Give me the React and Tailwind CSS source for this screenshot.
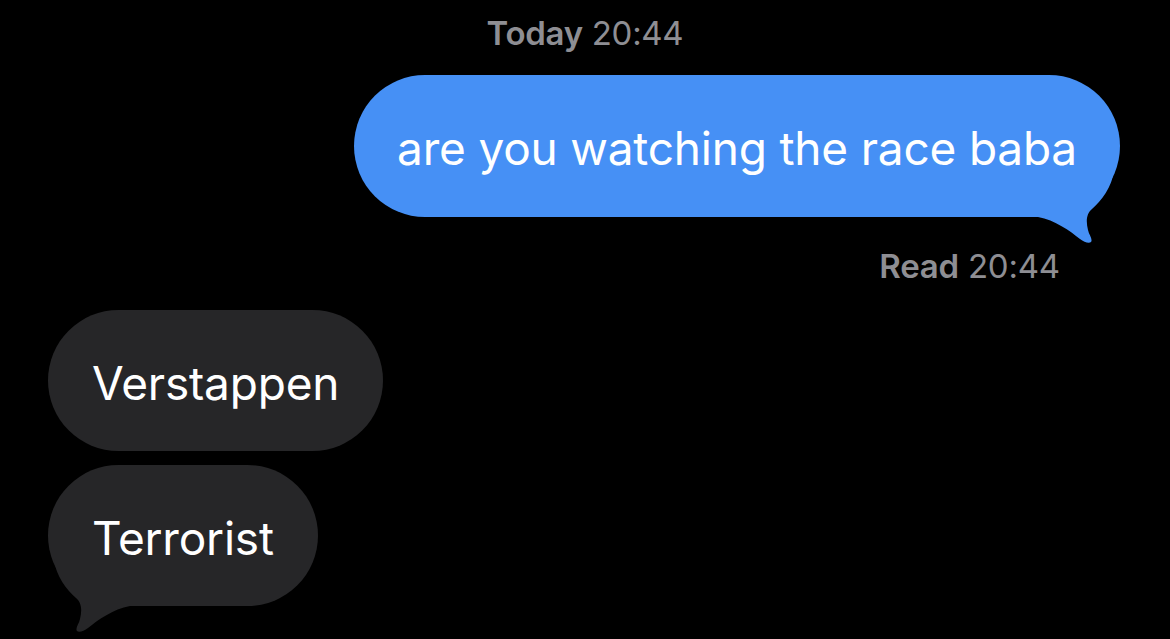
export default function App() {
  return (
    <div className="w-full h-[639px] bg-black overflow-hidden flex flex-col font-['Inter',sans-serif] antialiased">
      <div className="pt-[14px] h-[52px] text-center text-[33px] leading-[38px] text-[#8e8e93] tracking-[-0.3px]">
        <span className="font-semibold">Today</span> 20:44
      </div>

      {/* sent */}
      <div className="mt-[23px] flex justify-end pr-[50px]">
        <div className="relative h-[142px] flex items-center pt-[4px] px-[43px] rounded-[71px] bg-[#4690f5] text-white text-[46px] tracking-[-0.2px]">
          <span className="relative z-10">are you watching the race baba</span>
          <Tail className="absolute -right-[5px] -bottom-[28px] text-[#4690f5]" />
        </div>
      </div>
      <div className="mt-[33px] flex justify-end pr-[110px] text-[33px] leading-[32px] text-[#8e8e93] tracking-[-0.2px]">
        <span className="font-semibold mr-[9px]">Read</span>20:44
      </div>

      {/* received */}
      <div className="mt-[28px] flex flex-col items-start gap-[14px] pl-[48px]">
        <div className="h-[141px] flex items-center pt-[6px] px-[44px] rounded-[71px] bg-[#262628] text-white text-[46px] tracking-[-0.2px]">
          Verstappen
        </div>
        <div className="relative h-[141px] flex items-center pt-[6px] px-[44px] rounded-[71px] bg-[#262628] text-white text-[46px] tracking-[-0.2px]">
          <span className="relative z-10">Terrorist</span>
          <Tail className="absolute -left-[5px] -bottom-[28px] -scale-x-100 text-[#262628]" />
        </div>
      </div>
    </div>
  );
}

function Tail({ className }) {
  return (
    <svg width="95" height="75" viewBox="0 0 95 75" className={className}>
      <path
        d="M0 -6 L84 -6 C85 14 72 30 62 39 C56 44 56 52 58 60 C59 65 63 69 61 72 C59 74 54 72 50 69 C40 61 25 50 8 47 L0 47 Z"
        fill="currentColor"
      />
    </svg>
  );
}
